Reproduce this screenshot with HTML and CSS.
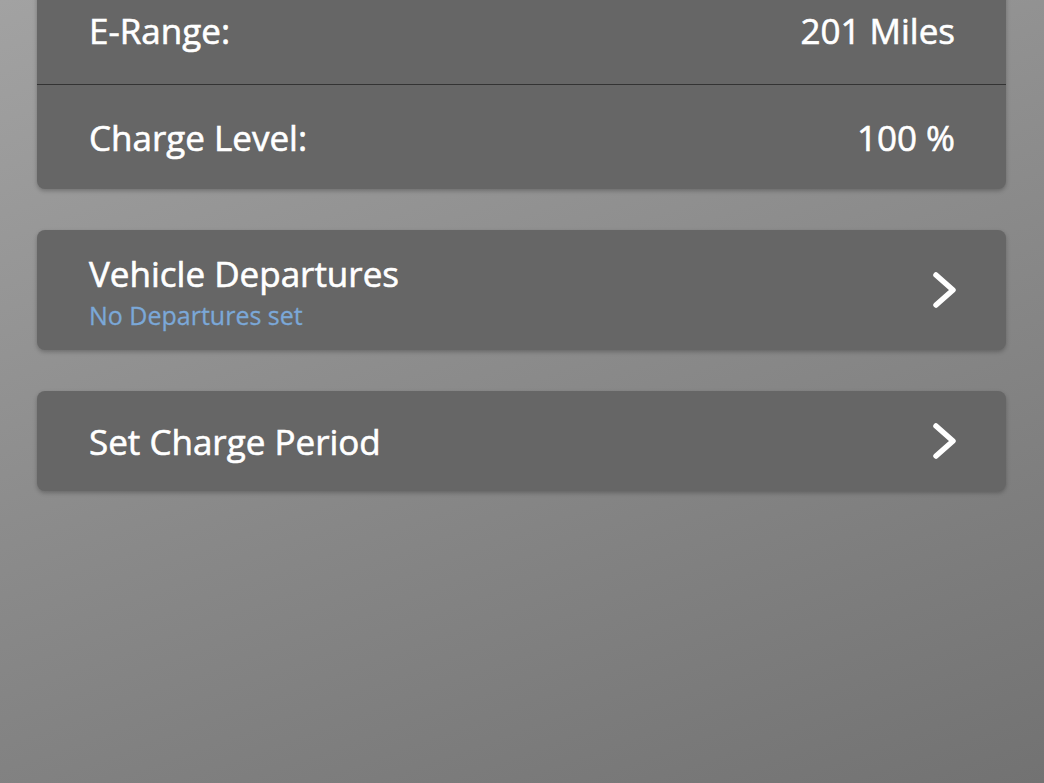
FILE: index.html
```html
<!DOCTYPE html>
<html lang="en">
<head>
    <meta charset="UTF-8">
    <meta name="viewport" content="width=device-width, initial-scale=1.0">
    <title>Charging</title>
    <link rel="stylesheet" href="styles.css">
</head>
<body>
    <div class="page">
        <div class="card">
            <div class="row first">
                <span class="label">E-Range:</span>
                <span class="value">201 Miles</span>
            </div>
            <div class="row">
                <span class="label">Charge Level:</span>
                <span class="value">100 %</span>
            </div>
        </div>

        <div class="card link departures">
            <div class="link-text">
                <div class="label">Vehicle Departures</div>
                <div class="sub">No Departures set</div>
            </div>
            <svg class="chevron" width="26" height="38" viewBox="0 0 26 38">
                <path d="M4 4 L21 19 L4 34" fill="none" stroke="#fff" stroke-width="5.5" stroke-linecap="round" stroke-linejoin="round"/>
            </svg>
        </div>

        <div class="card link period">
            <div class="label">Set Charge Period</div>
            <svg class="chevron" width="26" height="38" viewBox="0 0 26 38">
                <path d="M4 4 L21 19 L4 34" fill="none" stroke="#fff" stroke-width="5.5" stroke-linecap="round" stroke-linejoin="round"/>
            </svg>
        </div>
    </div>
</body>
</html>
```

FILE: styles.css
```css
html, body {
    height: 100%;
}
body {
    margin: 0;
    font-family: "Open Sans", "Noto Sans", sans-serif;
    color: #fff;
    background: linear-gradient(160deg, #a2a2a2 0%, #8c8c8c 45%, #727272 100%);
    overflow: hidden;
}
.page {
    margin-top: -20px;
    padding: 0 38px 0 37px;
    display: flex;
    flex-direction: column;
    gap: 41px;
}
.card {
    background: #666;
    border-radius: 8px;
    box-shadow: 0 2px 4px rgba(0,0,0,0.25);
}
.row {
    height: 104px;
    padding: 0 51px 0 52px;
    display: flex;
    align-items: center;
    justify-content: space-between;
}
.row.first {
    padding-bottom: 4px;
    height: 100px;
}
.row + .row {
    border-top: 1px solid #333;
}
.label,
.value {
    font-size: 35px;
    line-height: 1;
    -webkit-text-stroke: 0.6px #fff;
}
.link {
    display: flex;
    align-items: center;
    justify-content: space-between;
    padding: 0 48px 0 52px;
}
.departures {
    height: 120px;
}
.period {
    height: 100px;
}
.link-text {
    display: flex;
    flex-direction: column;
    gap: 12px;
    padding-top: 4px;
}
.sub {
    font-size: 25px;
    line-height: 1;
    color: #7ba8d8;
    -webkit-text-stroke: 0.3px #7ba8d8;
}
```
